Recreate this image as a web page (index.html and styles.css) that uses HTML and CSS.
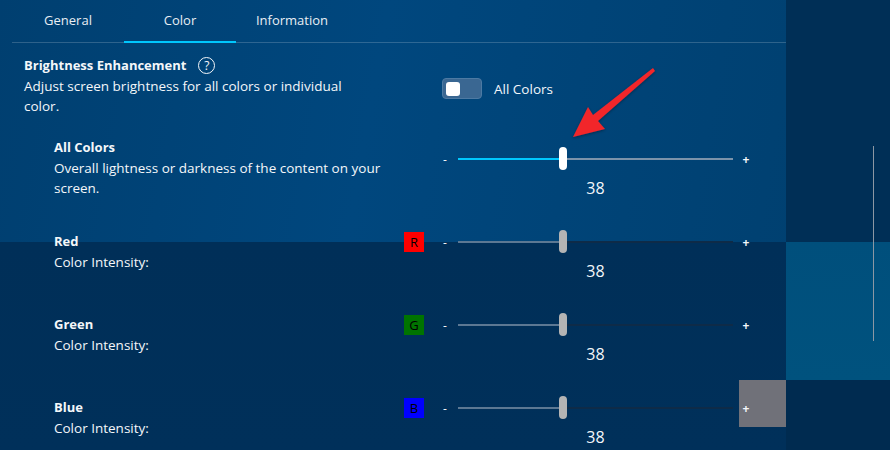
FILE: index.html
```html
<!DOCTYPE html>
<html>
<head>
<meta charset="utf-8">
<link rel="stylesheet" href="styles.css">
</head>
<body>
<div class="page">
  <main class="main">
    <nav class="tabs">
      <div class="tab">General</div>
      <div class="tab active">Color</div>
      <div class="tab">Information</div>
    </nav>

    <section class="intro">
      <div class="intro-text">
        <div class="title">Brightness Enhancement <span class="help">?</span></div>
        <div class="desc">Adjust screen brightness for all colors or individual<br>color.</div>
      </div>
      <div class="intro-toggle">
        <span class="toggle"><span class="knob"></span></span>
        <span class="toggle-label">All Colors</span>
      </div>
    </section>

    <div class="row row-all">
      <div class="row-text">
        <div class="row-title">All Colors</div>
        <div class="desc">Overall lightness or darkness of the content on your<br>screen.</div>
      </div>
      <div class="row-ctrl">
        <div class="slider-line">
          <span class="badge empty"></span>
          <span class="minus">-</span>
          <span class="track track-active"><span class="fill" style="width:105px"></span><span class="thumb" style="left:101px"></span></span>
          <span class="plus">+</span>
        </div>
        <div class="value">38</div>
      </div>
    </div>

    <div class="row">
      <div class="row-text">
        <div class="row-title">Red</div>
        <div class="desc">Color Intensity:</div>
      </div>
      <div class="row-ctrl">
        <div class="slider-line">
          <span class="badge red">R</span>
          <span class="minus">-</span>
          <span class="track"><span class="fill" style="width:105px"></span><span class="thumb" style="left:101px"></span></span>
          <span class="plus">+</span>
        </div>
        <div class="value">38</div>
      </div>
    </div>

    <div class="row">
      <div class="row-text">
        <div class="row-title">Green</div>
        <div class="desc">Color Intensity:</div>
      </div>
      <div class="row-ctrl">
        <div class="slider-line">
          <span class="badge green">G</span>
          <span class="minus">-</span>
          <span class="track"><span class="fill" style="width:105px"></span><span class="thumb" style="left:101px"></span></span>
          <span class="plus">+</span>
        </div>
        <div class="value">38</div>
      </div>
    </div>

    <div class="row">
      <div class="row-text">
        <div class="row-title">Blue</div>
        <div class="desc">Color Intensity:</div>
      </div>
      <div class="row-ctrl">
        <div class="slider-line">
          <span class="badge blue">B</span>
          <span class="minus">-</span>
          <span class="track"><span class="fill" style="width:105px"></span><span class="thumb" style="left:101px"></span></span>
          <span class="plus">+</span>
        </div>
        <div class="value">38</div>
      </div>
    </div>

    <div class="hover-box"></div>
  </main>
  <aside class="side">
    <div class="scrollbar"></div>
  </aside>

  <svg class="arrow" width="890" height="450" viewBox="0 0 890 450">
    <defs>
      <filter id="sh" x="-20%" y="-20%" width="140%" height="140%">
        <feDropShadow dx="0" dy="1" stdDeviation="1.5" flood-color="#000" flood-opacity="0.35"/>
      </filter>
    </defs>
    <polygon filter="url(#sh)" fill="#f2262a" points="573,137 588,107 593,115 653,68 655,71 598,121 605,129"/>
  </svg>
</div>
</body>
</html>
```
FILE: styles.css
```css
* { box-sizing: border-box; }

html, body {
  margin: 0;
  padding: 0;
}

body {
  width: 890px;
  height: 450px;
  overflow: hidden;
  font-family: "Open Sans", "Liberation Sans", sans-serif;
  font-size: 13px;
  color: #f4f7fa;
  background: #002e55;
}

.page {
  position: relative;
  display: flex;
  width: 890px;
  height: 450px;
}

.main {
  position: relative;
  width: 786px;
  height: 450px;
  overflow: hidden;
  background:
    linear-gradient(to bottom, transparent 0, transparent 242px, #002f58 242px, #00305a 450px),
    linear-gradient(100deg, #003f70 0%, #00477e 45%, #004070 100%);
}

.side {
  position: relative;
  width: 104px;
  height: 450px;
  background: linear-gradient(to bottom,
    #002f56 0, #002f56 242px,
    #004f7c 242px, #00527e 380px,
    #002b50 380px, #002b50 450px);
}

.scrollbar {
  position: absolute;
  left: 87px;
  top: 146px;
  width: 1px;
  height: 195px;
  background: #8c97a3;
}

.hover-box {
  position: absolute;
  z-index: 0;
  left: 739px;
  top: 380px;
  width: 47px;
  height: 47px;
  background: #707179;
}

/* Tabs */
.tabs {
  display: flex;
  margin-left: 12px;
  height: 43px;
  border-bottom: 1px solid rgba(255, 255, 255, 0.18);
}

.tab {
  width: 112px;
  text-align: center;
  line-height: 40px;
  font-size: 13px;
  color: #e9eef3;
}

.tab.active {
  border-bottom: 2px solid #00c7fd;
  height: 43px;
}

/* Intro */
.intro {
  display: flex;
  padding: 12px 0 0 24px;
}

.intro-text {
  width: 418px;
}

.title {
  font-weight: 700;
  line-height: 21px;
  display: flex;
  align-items: center;
}

.help {
  display: inline-flex;
  align-items: center;
  justify-content: center;
  width: 17px;
  height: 17px;
  margin-left: 12px;
  border: 1.4px solid #f4f7fa;
  border-radius: 50%;
  font-weight: 400;
  font-size: 12px;
  line-height: 1;
}

.desc {
  line-height: 20px;
  font-size: 13.5px;
}

.intro-toggle {
  display: flex;
  align-items: center;
  padding-top: 23px;
  height: 44px;
}

.toggle {
  display: inline-flex;
  align-items: center;
  width: 40px;
  height: 21px;
  padding: 0 3px;
  border-radius: 4px;
  background: #3a6792;
  border: 1px solid #4d7aa3;
}

.knob {
  width: 14px;
  height: 14px;
  border-radius: 3px;
  background: #ffffff;
}

.toggle-label {
  margin-left: 12px;
  font-size: 13.5px;
}

/* Rows */
.row {
  position: relative;
  z-index: 1;
  display: flex;
  padding-left: 54px;
  height: 83px;
}

.row-all {
  margin-top: 21px;
  height: 94px;
}

.row-text {
  width: 350px;
}

.row-title {
  font-weight: 700;
  line-height: 21px;
}

.row-ctrl {
  display: flex;
  flex-direction: column;
  margin-top: -1px;
}

.row-all .row-ctrl {
  margin-top: 10px;
}

.slider-line {
  display: flex;
  align-items: center;
  height: 24px;
}

.badge {
  width: 20px;
  height: 20px;
  display: inline-flex;
  align-items: center;
  justify-content: center;
  color: #000;
  font-size: 13px;
}

.badge.empty { background: transparent; }
.badge.red { background: #ff0000; }
.badge.green { background: #007400; }
.badge.blue { background: #0000ff; }

.minus {
  width: 14px;
  margin-left: 14px;
  text-align: center;
  font-size: 12px;
}

.plus {
  width: 26px;
  text-align: center;
  font-size: 12px;
  font-weight: 700;
}

.track {
  position: relative;
  width: 275px;
  height: 2px;
  margin-left: 6px;
  background: #0e2b48;
}

.track .fill {
  position: absolute;
  left: 0;
  top: 0;
  height: 2px;
  background: #5c7893;
}

.track .thumb {
  position: absolute;
  top: -11px;
  width: 8px;
  height: 23px;
  border-radius: 4px;
  background: #b4b4b4;
}

.track-active {
  background: #7c93aa;
}

.track-active .fill {
  background: #00c7fd;
}

.track-active .thumb {
  background: #ffffff;
}

.value {
  margin-top: 7px;
  margin-left: 54px;
  width: 275px;
  text-align: center;
  font-size: 16px;
  line-height: 20px;
}

/* Arrow overlay */
.arrow {
  position: absolute;
  left: 0;
  top: 0;
  pointer-events: none;
}
```
